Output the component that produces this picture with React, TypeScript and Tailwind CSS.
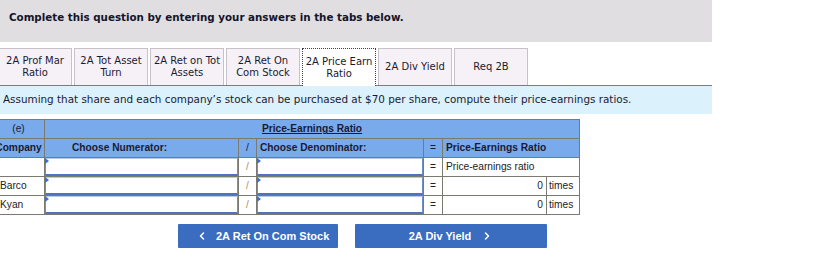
import { ChevronLeft, ChevronRight } from 'lucide-react'

const tabs = [
  { label: ['2A Prof Mar', 'Ratio'] },
  { label: ['2A Tot Asset', 'Turn'] },
  { label: ['2A Ret on Tot', 'Assets'] },
  { label: ['2A Ret On', 'Com Stock'] },
  { label: ['2A Price Earn', 'Ratio'], active: true },
  { label: ['2A Div Yield'] },
  { label: ['Req 2B'] },
]

const rows = [
  { company: '', result: null },
  { company: 'Barco', result: '0' },
  { company: 'Kyan', result: '0' },
]

function ChooseInput() {
  return (
    <div className="relative h-[18px] bg-white border border-[#6f8fcc] border-b-2 border-b-[#4f74bf] border-t-[#b9c8e6]">
      <span className="absolute left-[-1px] top-[-1px] w-0 h-0 border-t-[3px] border-b-[3px] border-l-[4px] border-t-transparent border-b-transparent border-l-[#3b6fd0]" />
    </div>
  )
}

export default function App() {
  const cell = 'border border-[#7a7a70]'
  return (
    <div className="w-[831px] h-[279px] bg-white overflow-hidden" style={{ fontFamily: '"DejaVu Sans", Verdana, sans-serif' }}>
      <div className="w-[712px]">
        <div className="h-[42px] bg-[#e0dee0] pl-[9px] pt-[10px] text-[10.3px] font-bold text-[#14142b]">
          Complete this question by entering your answers in the tabs below.
        </div>

        <div className="mt-[6px] flex gap-[2px] border-b border-[#7d7d7d] h-[38px]">
          {tabs.map((t, i) => (
            <div
              key={i}
              className={`w-[74px] h-[37px] flex flex-col items-center justify-center text-[10px] leading-[12px] text-center ${
                t.active
                  ? 'bg-white border border-dotted border-[#3a3a5a] border-b-0 h-[38px]'
                  : 'bg-[#f6f1f7] border border-[#c9c1c9] border-b-0'
              } ${i === 0 ? 'ml-[-2px]' : ''}`}
            >
              {t.label.map((l) => (
                <span key={l} className="text-[#1a1a33]">{l}</span>
              ))}
            </div>
          ))}
        </div>

        <div className="h-[28px] bg-[#dbf1fb] pl-[3px] flex items-center text-[10.4px] text-[#1a1a33] whitespace-nowrap">
          Assuming that share and each company’s stock can be purchased at $70 per share, compute their price-earnings ratios.
        </div>
      </div>

      <table
        className="mt-[5px] ml-[-8px] border-collapse text-[10.2px] text-[#222]"
        style={{ fontFamily: '"Liberation Sans", Arial, sans-serif' }}
      >
        <colgroup>
          <col className="w-[52px]" />
          <col className="w-[194px]" />
          <col className="w-[18px]" />
          <col className="w-[167px]" />
          <col className="w-[19px]" />
          <col className="w-[104px]" />
          <col className="w-[33px]" />
        </colgroup>
        <thead>
          <tr className="h-[19px] bg-[#79aaec] font-bold text-[#1a1a33]">
            <td className={`${cell} text-center font-normal`}>(e)</td>
            <td colSpan={6} className={`${cell} text-center underline`}>Price-Earnings Ratio</td>
          </tr>
          <tr className="h-[19px] bg-[#79aaec] font-bold text-[#1a1a33]">
            <td className={`${cell} text-center`}>Company</td>
            <td className={`${cell} pl-[27px]`}>Choose Numerator:</td>
            <td className={`${cell} text-center font-normal`}>/</td>
            <td className={`${cell} pl-[3px]`}>Choose Denominator:</td>
            <td className={`${cell} text-center font-normal`}>=</td>
            <td colSpan={2} className={`${cell} pl-[3px]`}>Price-Earnings Ratio</td>
          </tr>
        </thead>
        <tbody>
          {rows.map((r, i) => (
            <tr key={i} className="h-[19px]">
              <td className={`${cell} pl-[7px]`}>{r.company}</td>
              <td className={`${cell} p-0`}><ChooseInput /></td>
              <td className={`${cell} text-center text-[#b58a55]`}>/</td>
              <td className={`${cell} p-0`}><ChooseInput /></td>
              <td className={`${cell} text-center`}>=</td>
              {r.result === null ? (
                <td colSpan={2} className={`${cell} pl-[3px]`}>Price-earnings ratio</td>
              ) : (
                <>
                  <td className={`${cell} text-right pr-[3px]`}>{r.result}</td>
                  <td className={`${cell} pl-[2px]`}>times</td>
                </>
              )}
            </tr>
          ))}
        </tbody>
      </table>

      <div className="mt-[9px] ml-[178px] flex gap-[17px]" style={{ fontFamily: '"Liberation Sans", Arial, sans-serif' }}>
        <button className="w-[160px] h-[24px] bg-[#3a6cc0] text-white text-[11px] font-bold flex items-center pl-[18px] gap-[8px] rounded-[1px] whitespace-nowrap">
          <ChevronLeft size={12} strokeWidth={3} />
          2A Ret On Com Stock
        </button>
        <button className="w-[192px] h-[24px] bg-[#3a6cc0] text-white text-[11px] font-bold flex items-center justify-center gap-[10px] rounded-[1px] whitespace-nowrap">
          2A Div Yield
          <ChevronRight size={12} strokeWidth={3} />
        </button>
      </div>
    </div>
  )
}
